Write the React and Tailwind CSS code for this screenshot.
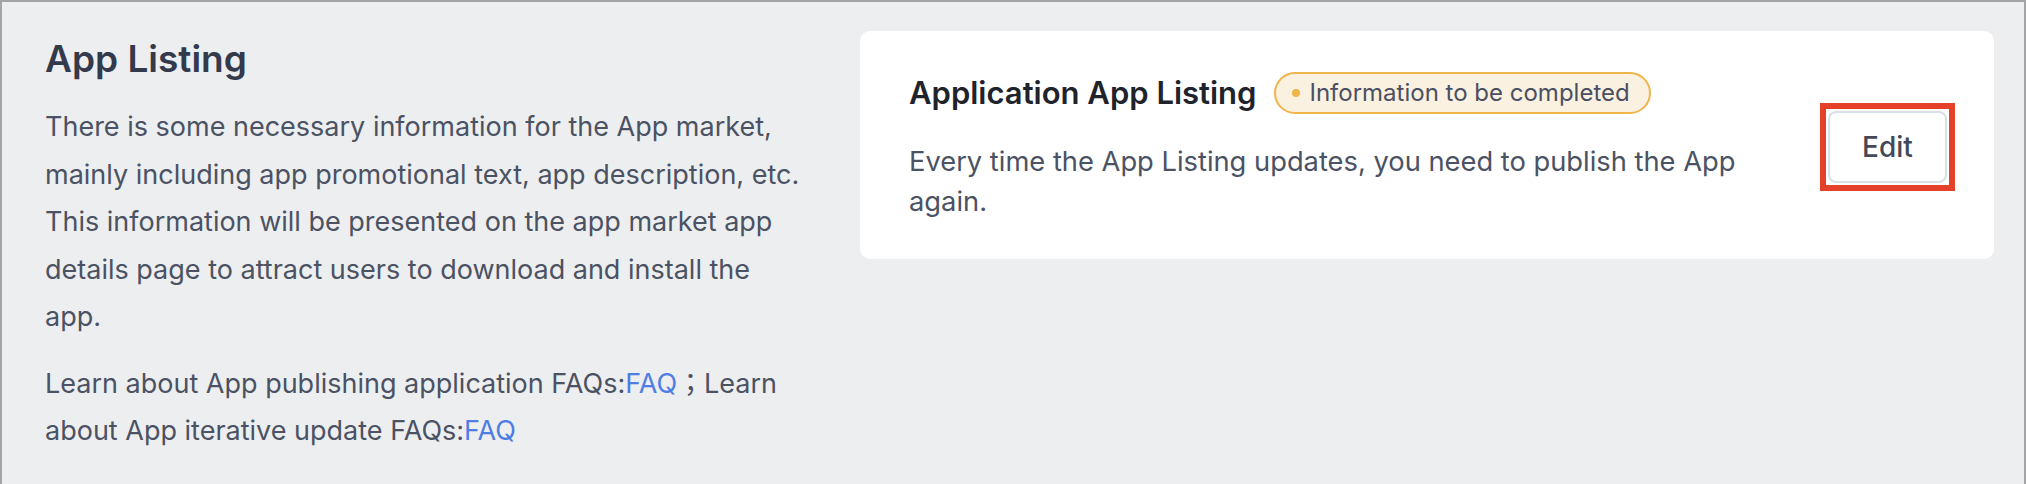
import React from 'react';

function StatusBadge({ label }) {
    return (
        <span className="inline-flex h-[42px] items-center gap-[9px] rounded-full border-2 border-[#efb44a] bg-[#faf1e1] pl-[16px] pr-[19px] text-[24px] text-[#4a5061]">
            <span className="h-[8px] w-[8px] rounded-full bg-[#efb44a]" />
            {label}
        </span>
    );
}

function ListingCard() {
    return (
        <div className="flex flex-1 items-center justify-between rounded-[10px] bg-white pl-[49px] pr-[47px] pt-[41px] pb-[37px]">
            <div className="flex flex-col">
                <div className="flex items-center gap-[18px]">
                    <h3 className="text-[31px] font-semibold leading-[42px] text-[#1f232b]">Application App Listing</h3>
                    <StatusBadge label="Information to be completed" />
                </div>
                <p className="mt-[28px] max-w-[860px] text-[27.3px] leading-[40px] text-[#4b5263]">
                    Every time the App Listing updates, you need to publish the App again.
                </p>
            </div>
            {/* red highlight around the action */}
            <div className="relative">
                <button className="h-[72px] w-[119px] rounded-[8px] border-2 border-[#d7dfe8] bg-white text-[28px] font-medium text-[#424857]">
                    Edit
                </button>
                <div className="pointer-events-none absolute -inset-[8px] border-[6px] border-[#e5412a]" />
            </div>
        </div>
    );
}

export default function App() {
    return (
        <div className="flex w-full items-start gap-[15px] border-2 border-[#a3a4a6] bg-[#edeef0] pl-[43px] pr-[30px] pt-[29px] pb-[29px] font-[Inter,'Noto_Sans_CJK_SC',sans-serif]">
            <div className="w-[800px] shrink-0 pt-[6px]">
                <h2 className="text-[37px] font-semibold leading-[44px] text-[#333a4b]">App Listing</h2>
                <p className="mt-[22px] text-[27px] leading-[47.5px] text-[#4b5263]">
                    There is some necessary information for the App market, mainly including app promotional text, app description, etc. This information will be presented on the app market app details page to attract users to download and install the
                    <br />
                    app.
                </p>
                <p className="mt-[17px] text-[27px] leading-[47.5px] text-[#4b5263]">
                    Learn about App publishing application FAQs:<a className="text-[#4e7ee3]">FAQ</a>
                    <span className="font-['Noto_Sans_CJK_JP',sans-serif]">；</span>Learn about App iterative update FAQs:<a className="text-[#4e7ee3]">FAQ</a>
                </p>
            </div>
            <ListingCard />
        </div>
    );
}
